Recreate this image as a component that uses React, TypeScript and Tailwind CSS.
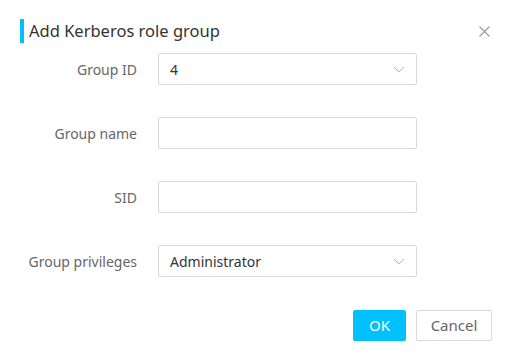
const font = { fontFamily: '"Noto Sans", "Open Sans", sans-serif' };

function Chevron() {
  return (
    <svg width="12" height="7" viewBox="0 0 12 7" fill="none" stroke="#b5b5b5" strokeWidth="1">
      <path d="M1 1l5 5 5-5" />
    </svg>
  );
}

function Field({ label, value, select }: { label: string; value?: string; select?: boolean }) {
  return (
    <div className="flex items-center">
      <label className="w-[137px] shrink-0 text-right text-[14px] text-[#666]">{label}</label>
      <div className="ml-[21px] flex h-[32px] w-[259px] items-center justify-between rounded-[2px] border border-[#d9d9d9] pl-[11px] pr-[11px] text-[14px] text-[#333]">
        <span>{value ?? ""}</span>
        {select && <Chevron />}
      </div>
    </div>
  );
}

export default function App() {
  return (
    <div className="h-[359px] w-[509px] bg-white" style={font}>
      {/* Header */}
      <div className="flex items-center justify-between pl-[20px] pr-[19px] pt-[19px]">
        <div className="flex items-center">
          <div className="h-[24px] w-[4px] bg-[#00bfff]" />
          <h2 className="ml-[5px] text-[16.5px] leading-[24px] text-[#333]">Add Kerberos role group</h2>
        </div>
        <svg width="11" height="11" viewBox="0 0 11 11" stroke="#999" strokeWidth="1.1">
          <path d="M0.5 0.5l10 10M10.5 0.5l-10 10" />
        </svg>
      </div>

      {/* Form */}
      <div className="mt-[10px] flex flex-col gap-[32px]">
        <Field label="Group ID" value="4" select />
        <Field label="Group name" />
        <Field label="SID" />
        <Field label="Group privileges" value="Administrator" select />
      </div>

      {/* Footer */}
      <div className="mt-[33px] flex justify-end gap-[10px] pr-[17px]">
        <button className="h-[31px] w-[53px] rounded-[2px] bg-[#00c0ff] text-[15px] text-white">OK</button>
        <button className="h-[31px] w-[76px] rounded-[2px] border border-[#d9d9d9] bg-white text-[15px] text-[#666]">
          Cancel
        </button>
      </div>
    </div>
  );
}
